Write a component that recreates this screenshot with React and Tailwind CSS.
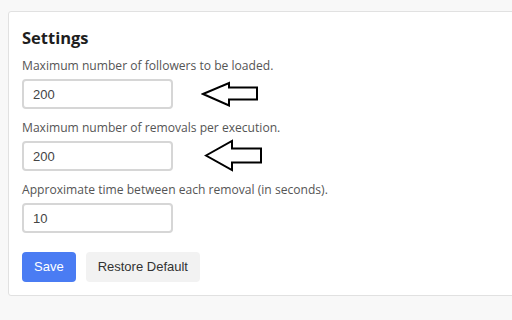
import React from 'react';

const fields = [
  { label: "Maximum number of followers to be loaded.", value: "200", arrow: "small" },
  { label: "Maximum number of removals per execution.", value: "200", arrow: "big" },
  { label: "Approximate time between each removal (in seconds).", value: "10", arrow: null },
];

function Arrow({ big }) {
  if (big) {
    return (
      <svg width="60" height="34" viewBox="0 0 60 34" className="ml-[31px] shrink-0">
        <path d="M2 16.5 L28 2 L28 9.5 L57 9.5 L57 23.5 L28 23.5 L28 31 Z" fill="white" stroke="black" strokeWidth="2" strokeLinejoin="miter" />
      </svg>
    );
  }
  return (
    <svg width="58" height="26" viewBox="0 0 58 26" className="ml-[28px] shrink-0">
      <path d="M2 13 L28 2 L28 6.5 L56 6.5 L56 18.5 L28 18.5 L28 24.5 Z" fill="white" stroke="black" strokeWidth="2" strokeLinejoin="miter" />
    </svg>
  );
}

export default function App() {
  return (
    <div className="w-[512px] h-[320px] overflow-hidden bg-[#f8f8f8] pl-2 pt-[11px]">
      <div className="w-[540px] bg-white border border-[#e1e1e1] rounded-[3px] px-[13px] pt-[14px] pb-[13px]">
        <h1 className="text-[16.5px] leading-[24px] font-bold text-[#1e1e1e] mb-[7px]" style={{ fontFamily: '"Open Sans", sans-serif' }}>
          Settings
        </h1>

        {fields.map((f) => (
          <div key={f.label} className="mb-[10px]">
            <label className="block text-[12.1px] leading-[18px] text-[#555] mb-[4px]" style={{ fontFamily: '"Open Sans", sans-serif' }}>
              {f.label}
            </label>
            <div className="flex items-center h-[30px]">
              <input
                defaultValue={f.value}
                className="w-[151px] h-[30px] border-2 border-[#d6d6d6] rounded-[4px] px-[9px] text-[13px] text-[#444] outline-none"
                style={{ fontFamily: '"Liberation Sans", Arial, sans-serif' }}
              />
              {f.arrow && <Arrow big={f.arrow === "big"} />}
            </div>
          </div>
        ))}

        <div className="flex gap-[10px] pt-[9px]" style={{ fontFamily: '"Liberation Sans", Arial, sans-serif' }}>
          <button className="h-[30px] px-[12px] rounded-[4px] bg-[#4a7cf3] text-white text-[13px]">Save</button>
          <button className="h-[30px] px-[12px] rounded-[4px] bg-[#f2f2f2] text-[#333] text-[13px]">Restore Default</button>
        </div>
      </div>
    </div>
  );
}
